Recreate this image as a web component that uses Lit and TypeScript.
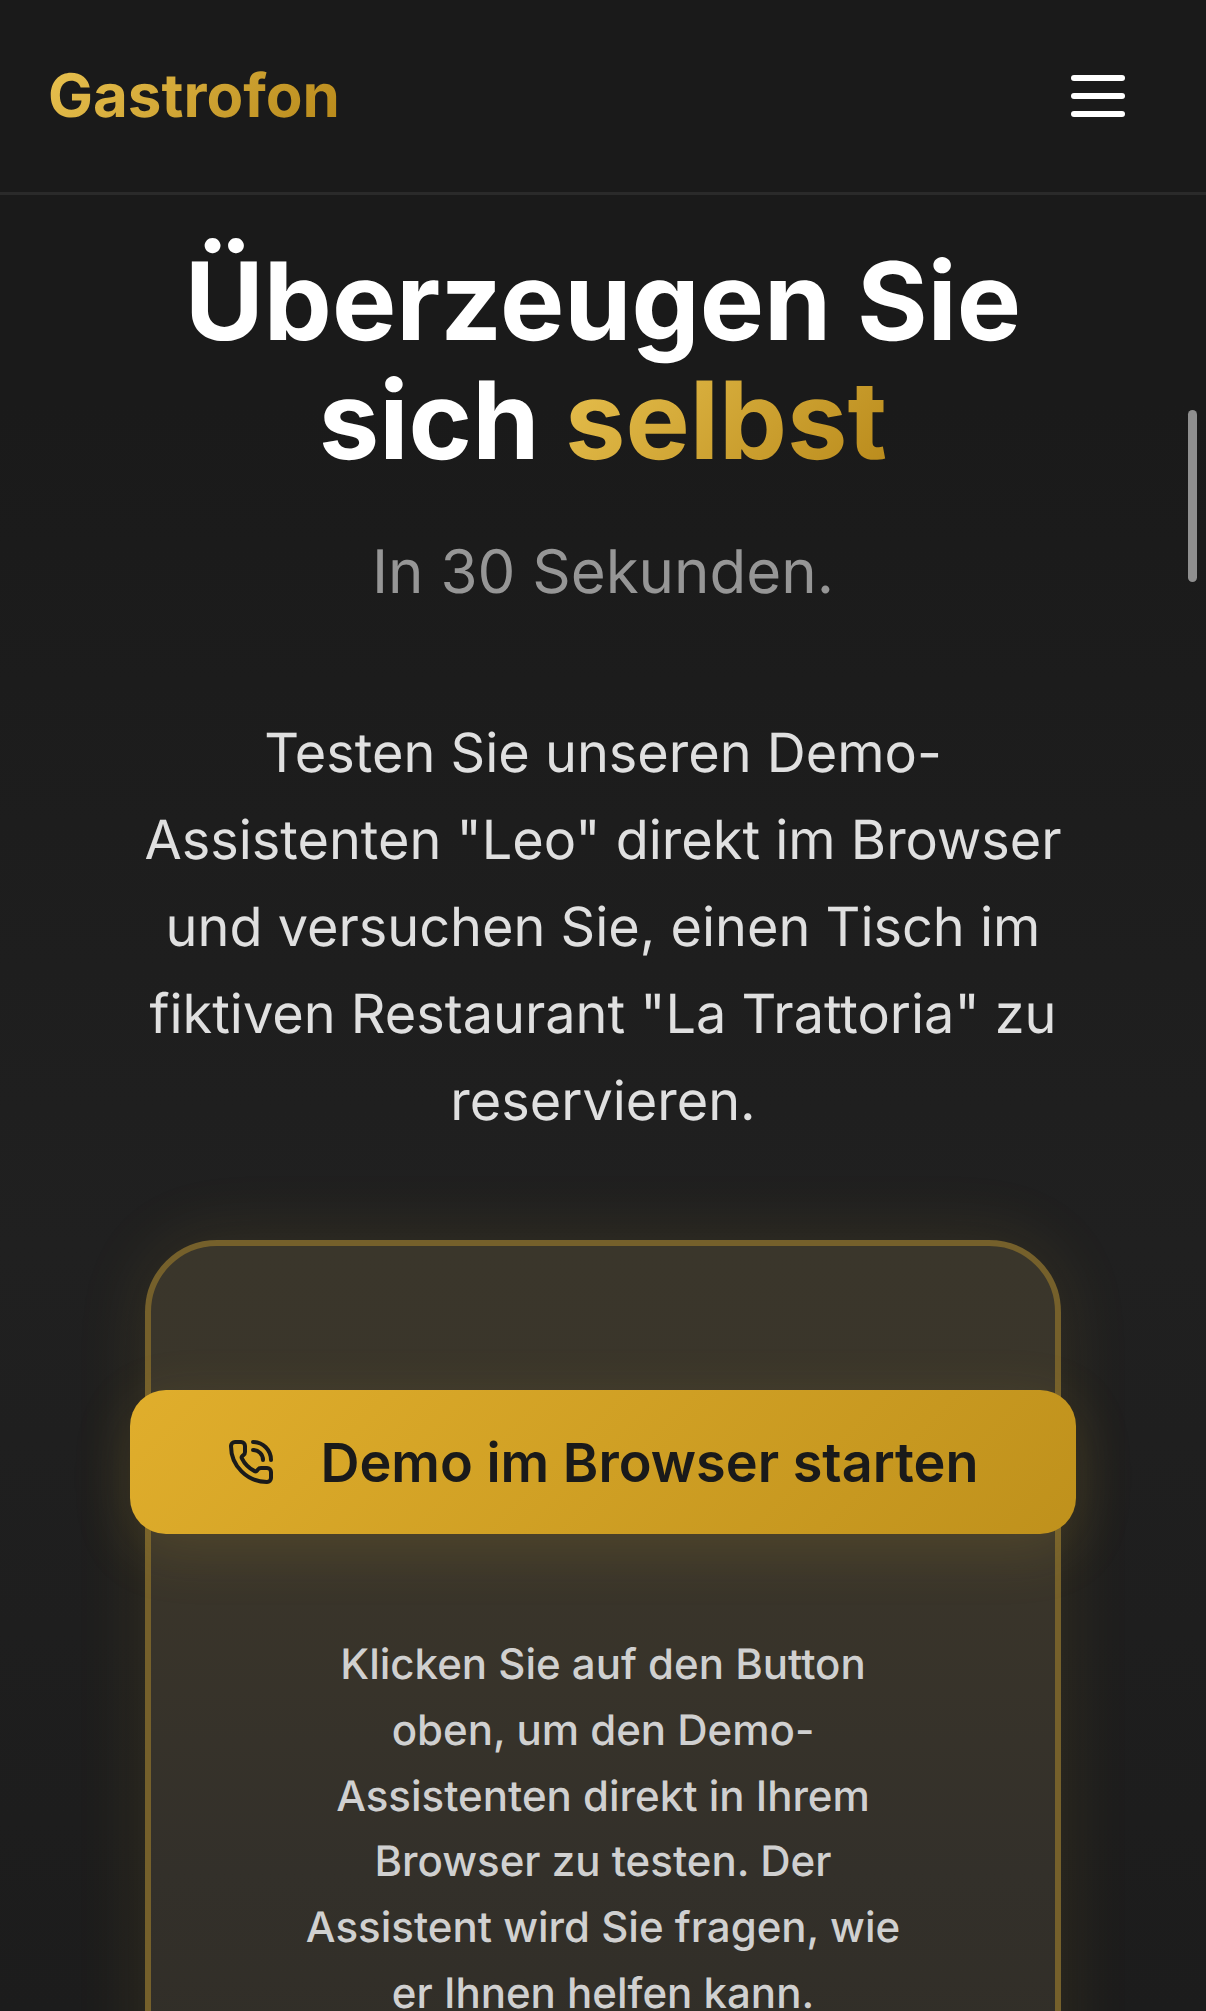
import { LitElement, html, css } from "lit";
import { customElement } from "lit/decorators.js";

@customElement("app-root")
export class AppRoot extends LitElement {
  static styles = css`
    :host {
      display: block;
      position: relative;
      height: 2011px;
      overflow: hidden;
      background: linear-gradient(180deg, #1a1a1a 0%, #1a1a1a 20%, #202020 62%, #1c1c1c 100%);
      font-family: Inter, "Liberation Sans", sans-serif;
      text-rendering: geometricPrecision;
      -webkit-font-smoothing: antialiased;
    }
    header {
      height: 192px;
      box-sizing: content-box;
      border-bottom: 3px solid #2a2a2a;
      background: #1a1a1a;
      display: flex;
      align-items: center;
      justify-content: space-between;
      padding: 0 81px 0 48px;
    }
    .logo {
      font-size: 60px;
      font-weight: 700;
      line-height: 1;
      background: linear-gradient(135deg, #e8c14f 0%, #b8891a 100%);
      -webkit-background-clip: text;
      background-clip: text;
      color: transparent;
    }
    .menu {
      display: flex;
      flex-direction: column;
      gap: 12px;
      width: 54px;
    }
    .menu span {
      display: block;
      height: 6px;
      border-radius: 3px;
      background: #fff;
    }
    main {
      display: flex;
      flex-direction: column;
      align-items: center;
      text-align: center;
      padding: 47px 130px 0;
    }
    h1 {
      margin: 0;
      font-size: 108px;
      line-height: 119px;
      font-weight: 700;
      color: #fff;
    }
    .gold {
      background: linear-gradient(135deg, #e8c14f 0%, #b8891a 100%);
      -webkit-background-clip: text;
      background-clip: text;
      color: transparent;
    }
    .sub {
      margin: 47px 0 0;
      font-size: 60px;
      line-height: 90px;
      color: #969696;
    }
    .lead {
      margin: 93px 0 0;
      font-size: 54px;
      line-height: 87px;
      color: #e0e0e0;
    }
    .card {
      position: relative;
      align-self: stretch;
      margin: 95px 15px 0;
      height: 900px;
      flex: none;
      border: 6px solid #75602b;
      border-radius: 72px;
      background: linear-gradient(180deg, #3a362b 0%, #3a352a 30%, #33302a 60%, #2f2c25 100%);
      box-shadow: 0 0 72px rgba(212, 175, 55, 0.12);
      display: flex;
      flex-direction: column;
      align-items: center;
      padding-top: 144px;
    }
    button {
      flex: none;
      width: 946px;
      height: 144px;
      border: 0;
      border-radius: 36px;
      margin: 0 -21px;
      display: flex;
      align-items: center;
      justify-content: center;
      gap: 45px;
      font: 600 54px Inter, "Liberation Sans", sans-serif;
      color: #1a1a1a;
      background: linear-gradient(135deg, #e0ae2c 0%, #bf911c 100%);
      box-shadow: 0 15px 60px rgba(212, 175, 55, 0.15);
    }
    button svg {
      width: 48px;
      height: 48px;
      flex: none;
    }
    .note {
      margin: 98px 0 0;
      width: 620px;
      font-size: 42px;
      font-weight: 500;
      line-height: 65.8px;
      color: #d0d0d0;
    }
    .scroll {
      position: absolute;
      left: 1188px;
      top: 410px;
      width: 9px;
      height: 172px;
      border-radius: 5px;
      background: #8f8f8f;
    }
  `;

  render() {
    return html`
      <header>
        <div class="logo">Gastrofon</div>
        <div class="menu"><span></span><span></span><span></span></div>
      </header>
      <main>
        <h1>Überzeugen Sie sich <span class="gold">selbst</span></h1>
        <p class="sub">In 30 Sekunden.</p>
        <p class="lead">Testen Sie unseren Demo-Assistenten "Leo" direkt im Browser und versuchen Sie, einen Tisch im fiktiven Restaurant "La Trattoria" zu reservieren.</p>
        <section class="card">
          <button>
            <svg viewBox="0 0 24 24" fill="none" stroke="currentColor" stroke-width="2" stroke-linecap="round" stroke-linejoin="round">
              <path d="M13 2a9 9 0 0 1 9 9" />
              <path d="M13 6a5 5 0 0 1 5 5" />
              <path d="M13.832 16.568a1 1 0 0 0 1.213-.303l.355-.465A2 2 0 0 1 17 15h3a2 2 0 0 1 2 2v3a2 2 0 0 1-2 2A18 18 0 0 1 2 4a2 2 0 0 1 2-2h3a2 2 0 0 1 2 2v3a2 2 0 0 1-.8 1.6l-.468.351a1 1 0 0 0-.292 1.233 14 14 0 0 0 6.392 6.384" />
            </svg>
            <span>Demo im Browser starten</span>
          </button>
          <p class="note">Klicken Sie auf den Button oben, um den Demo-Assistenten direkt in Ihrem Browser zu testen. Der Assistent wird Sie fragen, wie er Ihnen helfen kann.</p>
        </section>
      </main>
      <div class="scroll"></div>
    `;
  }
}
